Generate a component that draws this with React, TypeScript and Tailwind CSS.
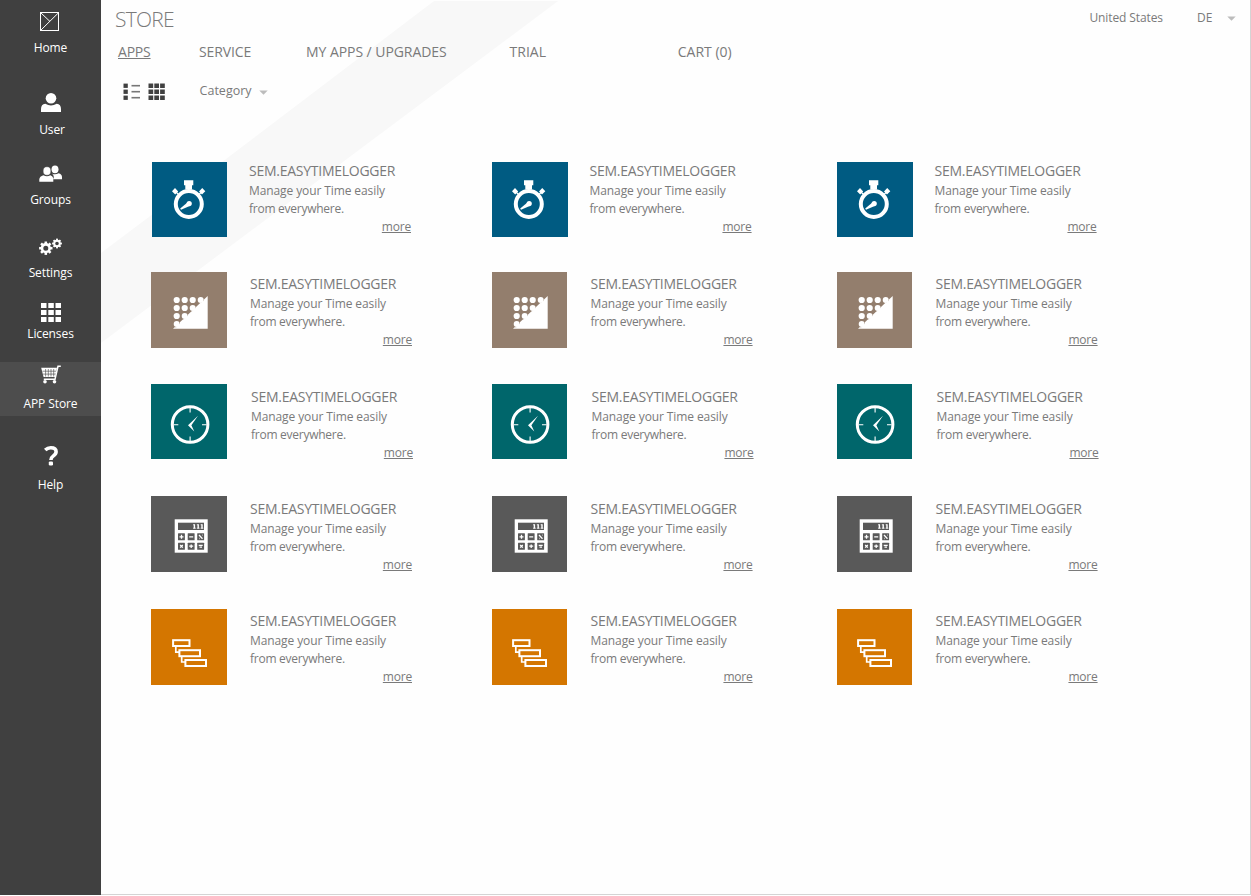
import React from "react";

type NavItem = {
  label: string;
  box: string;
  iconBox: string;
  viewBox: string;
  labelShift?: string;
  icon: React.ReactNode;
};

function Gear({ cx, cy, r, teeth, hole }: { cx: number; cy: number; r: number; teeth: number; hole: number }) {
  const angles = Array.from({ length: teeth }, (_, i) => (360 / teeth) * i);
  return (
    <g>
      <circle cx={cx} cy={cy} r={(r * 0.76 + hole) / 2} fill="none" stroke="#fff" strokeWidth={r * 0.76 - hole} />
      {angles.map((a) => (
        <rect
          key={a}
          x={cx - r * 0.19}
          y={cy - r}
          width={r * 0.38}
          height={r * 0.42}
          fill="#fff"
          transform={`rotate(${a} ${cx} ${cy})`}
        />
      ))}
    </g>
  );
}

const navItems: NavItem[] = [
  {
    label: "Home",
    box: "h-[58px]",
    iconBox: "h-[38px]",
    viewBox: "0 0 101 38",
    icon: (
      <g fill="none" stroke="#fff">
        <rect x="40.5" y="12.5" width="18" height="18" />
        <path d="M41 30L58.5 12.8M41 13L50 21.5" strokeWidth="1" />
      </g>
    ),
  },
  {
    label: "User",
    box: "mt-[30px] h-[52px]",
    iconBox: "h-[32px]",
    viewBox: "0 88 101 32",
    labelShift: "pl-[3px]",
    icon: (
      <g fill="#fff">
        <circle cx="51" cy="98.3" r="5.3" />
        <path d="M41 112V109Q41 104.3 45.3 103.7Q51 107.3 56.7 103.7Q61 104.3 61 109V112Z" />
      </g>
    ),
  },
  {
    label: "Groups",
    box: "mt-5 h-[50px]",
    iconBox: "h-[30px]",
    viewBox: "0 160 101 30",
    icon: (
      <g fill="#fff">
        <ellipse cx="55" cy="169.3" rx="3.5" ry="3.9" />
        <path d="M53 179.3H62V177Q62 174.2 58.6 173.2Q55 175.4 51.8 173.4Q55 175.8 53 179.3Z" />
        <ellipse cx="47" cy="171" rx="3.9" ry="4.3" stroke="#404040" strokeWidth="0.5" />
        <path d="M39.3 181.7V179.3Q39.6 176.3 43.4 175.2Q47 177.4 50.4 175.2Q53.3 176.3 53.3 179.5V181.7Z" />
      </g>
    ),
  },
  {
    label: "Settings",
    box: "mt-[23px] h-[50px]",
    iconBox: "h-[30px]",
    viewBox: "0 233 101 30",
    icon: (
      <g>
        <Gear cx={45.8} cy={248.2} r={6.7} teeth={8} hole={2.5} />
        <Gear cx={57} cy={243.5} r={4.9} teeth={8} hole={1.8} />
      </g>
    ),
  },
  {
    label: "Licenses",
    box: "mt-[15px] h-[46px]",
    iconBox: "h-[26px]",
    viewBox: "0 298 101 26",
    icon: (
      <g fill="#fff">
        {[303, 310, 317].map((y) => [41, 48.3, 55.5].map((x) => <rect key={`${x}-${y}`} x={x} y={y} width="5.5" height="5" />))}
      </g>
    ),
  },
  {
    label: "APP Store",
    box: "mt-[18px] h-[54px] bg-[#4d4d4d]",
    iconBox: "h-[32px]",
    viewBox: "0 362 101 32",
    icon: (
      <g>
        <path d="M41.2 367.8H57L55 377H43.6Z" fill="#fff" />
        <path d="M42.5 371.2H57M43 374.1H56M45.6 369V376.5M48.3 369V376.5M51 369V376.5M53.7 369V376.5" stroke="#4d4d4d" strokeWidth="0.65" />
        <path d="M60.8 366.3H58L55 379.2H43.8" fill="none" stroke="#fff" strokeWidth="1.5" />
        <circle cx="45" cy="381.7" r="1.8" fill="#fff" />
        <circle cx="54.5" cy="381.7" r="1.8" fill="#fff" />
      </g>
    ),
  },
  {
    label: "Help",
    box: "mt-6 h-[55px]",
    iconBox: "h-[35px]",
    viewBox: "0 440 101 35",
    icon: (
      <g>
        <path d="M45.2 450Q47.6 447.8 50.8 447.8Q56.1 447.8 56.1 451.8Q56.1 454 53.4 455.9Q50.9 457.7 50.9 460" fill="none" stroke="#fff" strokeWidth="3.6" />
        <rect x="48.8" y="461.4" width="4.2" height="4" rx="1.2" fill="#fff" />
      </g>
    ),
  },
];

function Sidebar() {
  return (
    <nav className="flex h-[895px] w-[101px] shrink-0 flex-col bg-[#404040] text-white">
      {navItems.map((item) => (
        <a key={item.label} className={`flex shrink-0 flex-col ${item.box}`}>
          <svg className={`w-[101px] shrink-0 ${item.iconBox}`} viewBox={item.viewBox}>
            {item.icon}
          </svg>
          <span className={`h-5 text-center text-[12px] leading-5 tracking-[-0.1px] ${item.labelShift ?? "pl-0"}`}>{item.label}</span>
        </a>
      ))}
    </nav>
  );
}

const stopwatch = (
  <g fill="#fff">
    <circle cx="37.8" cy="42" r="13" fill="none" stroke="#fff" strokeWidth="4" />
    <path d="M33 18.3H42.3V23.3H41V27.5H34.3V23.3H33Z" />
    <path d="M24 26L27.2 29.4L24.2 32.5L21 29.3ZM51.2 26L54.3 29.3L51 32.5L48 29.4Z" />
    <path d="M25 30L29 34M50.5 30L46.5 34" stroke="#fff" strokeWidth="1.2" />
    <circle cx="38.2" cy="41.6" r="2.6" />
    <path d="M36.4 40.6L29.2 46.6L30 47.8L39.3 43.7Z" />
  </g>
);

const dotTriangle = (
  <g fill="#fff">
    <path d="M22 56.7L56.7 24V56.7Z" />
    {[
      [41.7, 36], [33.7, 44], [25.7, 52], [49.7, 28],
    ].map(([x, y]) => (
      <circle key={`halo-${x}`} cx={x - 0.8} cy={y - 0.8} r="4.1" fill="#937e6d" />
    ))}
    {[
      [25.7, 28], [33.7, 28], [41.7, 28],
      [25.7, 36], [33.7, 36], [25.7, 44],
    ].map(([x, y]) => (
      <circle key={`${x}-${y}`} cx={x} cy={y} r="3.1" />
    ))}
    {[
      [49.7, 28], [41.7, 36], [33.7, 44], [25.7, 52],
    ].map(([x, y]) => (
      <circle key={`edge-${x}`} cx={x} cy={y} r="3" />
    ))}
    <path d="M25.5 55L33 47.5L41 39.5L49 31.5L54 28V56H25.5Z" />
  </g>
);

const clock = (
  <g fill="none" stroke="#fff">
    <circle cx="39.1" cy="40.5" r="17.8" strokeWidth="3" />
    <path d="M39.1 24V28.5M39.1 52.5V57M22.5 40.8H27.3M51 40.8H55.7" strokeWidth="1.1" />
    <path d="M47 31.8L37 41.2L43.3 47.5L40.4 41.2Z" fill="#fff" stroke="none" />
  </g>
);

const calculator = (
  <g>
    <rect x="23.7" y="23.3" width="33" height="33.4" fill="#fff" />
    <rect x="27" y="26.7" width="26" height="7.3" fill="#595959" />
    <path d="M43.4 28.2V32.5M47.2 28.2V32.5M51 28.2V32.5" fill="none" stroke="#fff" strokeWidth="1.4" />
    <path d="M42 28.8H43.4M45.8 28.8H47.2M49.6 28.8H51M42 32.2H44.8M45.8 32.2H48.6M49.6 32.2H52.4" fill="none" stroke="#fff" strokeWidth="0.8" />
    {[37.3, 46.7].map((y) => [27, 36.7, 46.2].map((x) => <rect key={`${x}-${y}`} x={x} y={y} width="6.9" height="7" rx="0.5" fill="#595959" />))}
    <path d="M28.5 40.8H32.5M30.5 38.8V42.8M38.2 40.8H42.2M48 39L51.5 42.7M51 39.2H51.5M48 42.5H48.5M29.2 49L31.8 51.6M31.8 49L29.2 51.6M38.2 50.2H42.2M40.2 48.4V52M47.7 49.3H51.7M48.5 51.2H51" fill="none" stroke="#fff" strokeWidth="1.3" />
  </g>
);

const gantt = (
  <g fill="none" stroke="#fff" strokeWidth="2">
    <rect x="22.1" y="31.2" width="16.4" height="5.8" />
    <rect x="28.4" y="41.2" width="20.6" height="6" />
    <rect x="34.4" y="51" width="20.6" height="6" />
    <path d="M24.8 37V43.2H28.4M30.7 47.2V53H34.4" strokeWidth="1.7" />
  </g>
);

type Row = {
  id: string;
  color: string;
  height: string;
  tile: string;
  shift: string[];
  widths: string[];
  textTop: string;
  textShift: string;
  icon: React.ReactNode;
};

const rows: Row[] = [
  { id: "stopwatch", color: "bg-[#005b82]", height: "h-[110px]", tile: "h-[75px]", shift: ["ml-px", "ml-px", "ml-px"], widths: ["w-[75px]", "w-[76px]", "w-[76px]"], textTop: "pt-0", textShift: "-ml-px", icon: stopwatch },
  { id: "dots", color: "bg-[#937e6d]", height: "h-[112px]", tile: "h-[76px]", shift: ["ml-0", "ml-px", "ml-px"], widths: ["w-[76px]", "w-[75px]", "w-[75px]"], textTop: "pt-[3px]", textShift: "ml-0", icon: dotTriangle },
  { id: "clock", color: "bg-[#00666b]", height: "h-[112px]", tile: "h-[75px]", shift: ["ml-0", "ml-px", "ml-px"], widths: ["w-[76px]", "w-[75px]", "w-[75px]"], textTop: "pt-1", textShift: "ml-px", icon: clock },
  { id: "calculator", color: "bg-[#595959]", height: "h-[113px]", tile: "h-[76px]", shift: ["ml-0", "ml-px", "ml-px"], widths: ["w-[76px]", "w-[75px]", "w-[75px]"], textTop: "pt-1", textShift: "ml-0", icon: calculator },
  { id: "gantt", color: "bg-[#d47600]", height: "h-[112px]", tile: "h-[76px]", shift: ["ml-0", "ml-px", "ml-px"], widths: ["w-[76px]", "w-[75px]", "w-[75px]"], textTop: "pt-[3px]", textShift: "ml-0", icon: gantt },
];

function AppCard({ row, column }: { row: Row; column: number }) {
  const origin = row.shift[column] === "ml-px" ? 1 : 0;
  const height = row.tile === "h-[75px]" ? 75 : 76;
  return (
    <article className="flex items-start">
      <div className={`shrink-0 ${column === 0 ? "w-[99px]" : "w-[99.6px]"}`}>
        <div className={`overflow-hidden ${row.color} ${row.tile} ${row.shift[column]} ${row.widths[column]}`}>
          <svg className="block h-full w-[76px]" viewBox={`${origin} 0 76 ${height}`} preserveAspectRatio="xMinYMin">
            {row.icon}
          </svg>
        </div>
      </div>
      <div className={`w-[162px] ${row.textTop} ${row.textShift}`}>
        <h2 className="h-5 text-[14px] leading-[18px] tracking-[-0.26px] whitespace-nowrap">SEM.EASYTIMELOGGER</h2>
        <p className="text-[12px] leading-[18px] tracking-[-0.1px] whitespace-nowrap">
          Manage your Time easily
          <br />
          <span className="tracking-[-0.26px]">from everywhere.</span>
        </p>
        <div className="flex justify-end">
          <a className="text-[12px] leading-[18px] tracking-[-0.2px] underline underline-offset-1">more</a>
        </div>
      </div>
    </article>
  );
}

function Caret() {
  return (
    <svg className="h-[5px] w-[9px]" viewBox="0 0 9 5">
      <path d="M0.3 0.5H8.7L4.5 4.7Z" fill="#bcbcbc" />
    </svg>
  );
}

function Header() {
  return (
    <header className="h-[162px]">
      <div className="flex h-[38px] items-start justify-between pr-[14px] pl-[14px]">
        <h1 className="pt-[5px] text-[21px] leading-[28px] font-light tracking-[-0.75px]">STORE</h1>
        <div className="flex items-center pt-2 text-[12px] leading-5">
          <span className="tracking-[-0.1px]">United States</span>
          <span className="ml-[34px] w-[30px]">DE</span>
          <Caret />
        </div>
      </div>
      <div className="flex h-[28px] items-center pl-[17px] text-[14px] leading-5 whitespace-nowrap">
        <a className="w-[81px] tracking-[-0.2px] underline underline-offset-1">APPS</a>
        <a className="w-[107px] tracking-[-0.1px]">SERVICE</a>
        <a className="w-[203.6px] tracking-[-0.06px]">MY APPS / UPGRADES</a>
        <a className="w-[168.2px]">TRIAL</a>
        <a>CART (0)</a>
      </div>
      <div className="flex h-[50px] items-center pl-[22px]">
        <svg className="h-[17px] w-[17px]" viewBox="0 0 17 17" fill="#404040">
          {[0, 6, 12].map((y) => (
            <g key={y}>
              <rect x="0.5" y={y + 0.6} width="4.3" height="4.3" />
              <rect x="8.5" y={y + 1.9} width="8.5" height="1.6" fill="#777" />
            </g>
          ))}
        </svg>
        <svg className="ml-2 h-[17px] w-[17px]" viewBox="0 0 17 17" fill="#404040">
          {[0, 6, 12].map((y) => [0.5, 6.3, 12.1].map((x) => <rect key={`${x}-${y}`} x={x} y={y + 0.5} width="4.7" height="4.5" />))}
        </svg>
        <span className="ml-[34.6px] text-[12.5px] leading-5">Category</span>
        <span className="ml-[7px] pt-0.5">
          <Caret />
        </span>
      </div>
    </header>
  );
}

export default function App() {
  return (
    <div className="flex h-[896px] w-[1251px] overflow-hidden bg-white font-['Open_Sans','Noto_Sans',sans-serif] text-[#7a7a7a]">
      <Sidebar />
      <main className="relative h-[895px] w-[1150px] border-r border-b border-[#d4d4d4] bg-[#fefefe]">
        <svg className="absolute top-0 left-0 h-[350px] w-[480px]" viewBox="0 0 480 350" fill="#f8f8f8">
          <path d="M333 1H457L0 343V253L125 159Z" />
        </svg>
        <div className="relative">
          <Header />
          <div className="pl-[50px]">
            {rows.map((row) => (
              <section key={row.id} className={`grid grid-cols-[340px_345px_300px] ${row.height}`}>
                {[0, 1, 2].map((column) => (
                  <AppCard key={column} row={row} column={column} />
                ))}
              </section>
            ))}
          </div>
        </div>
      </main>
    </div>
  );
}
